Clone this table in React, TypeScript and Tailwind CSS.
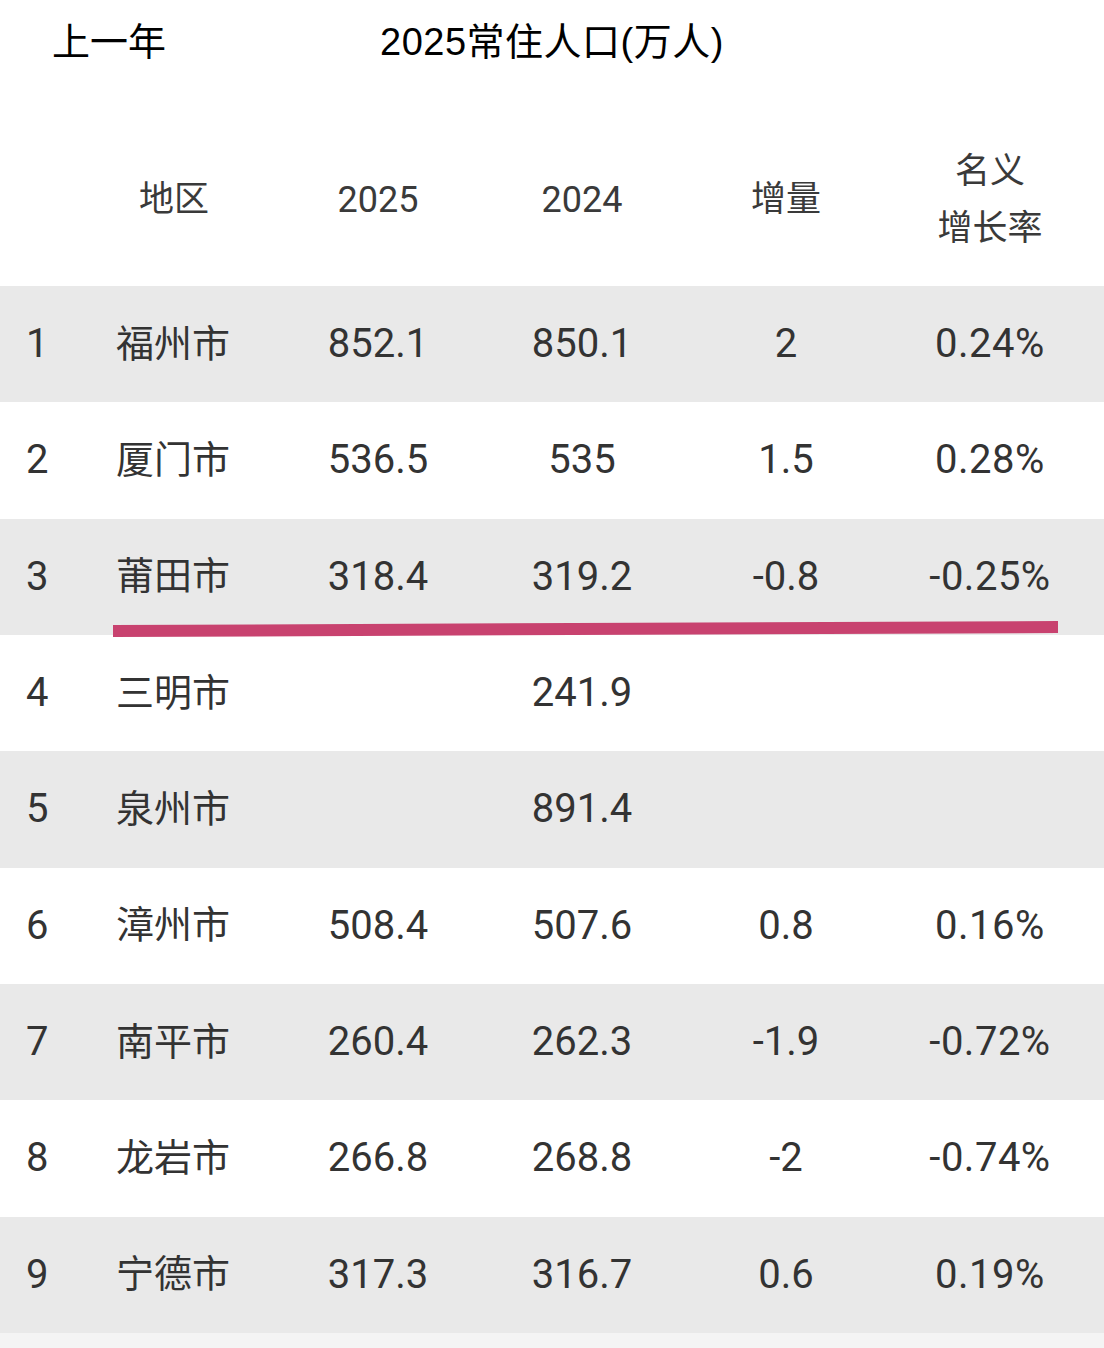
const rows = [
  { n: 1, city: "福州市", a: "852.1", b: "850.1", d: "2", r: "0.24%" },
  { n: 2, city: "厦门市", a: "536.5", b: "535", d: "1.5", r: "0.28%" },
  { n: 3, city: "莆田市", a: "318.4", b: "319.2", d: "-0.8", r: "-0.25%" },
  { n: 4, city: "三明市", a: "", b: "241.9", d: "", r: "" },
  { n: 5, city: "泉州市", a: "", b: "891.4", d: "", r: "" },
  { n: 6, city: "漳州市", a: "508.4", b: "507.6", d: "0.8", r: "0.16%" },
  { n: 7, city: "南平市", a: "260.4", b: "262.3", d: "-1.9", r: "-0.72%" },
  { n: 8, city: "龙岩市", a: "266.8", b: "268.8", d: "-2", r: "-0.74%" },
  { n: 9, city: "宁德市", a: "317.3", b: "316.7", d: "0.6", r: "0.19%" },
]

const grid = "grid grid-cols-[116px_160px_204px_204px_204px_204px_12px]"

export default function App() {
  return (
    <div className="w-[1104px] h-[1348px] overflow-hidden bg-white font-['Roboto','Noto_Sans_CJK_SC',sans-serif] text-[#333]">
      {/* title */}
      <div className="flex h-[84px] items-center text-[38px] text-black font-['Liberation_Sans','Noto_Sans_CJK_SC',sans-serif]">
        <div className="w-[380px] pl-[52px]">上一年</div>
        <div className="tracking-[0.5px]">2025常住人口(万人)</div>
      </div>

      {/* header */}
      <div className={`${grid} h-[202px] items-center pt-[30px] text-[35px] text-[#3a3a3a]`}>
        <div />
        <div className="pl-[23px]">地区</div>
        <div className="text-center text-[36px]">2025</div>
        <div className="text-center text-[36px]">2024</div>
        <div className="text-center">增量</div>
        <div className="text-center leading-[57px]">
          名义
          <br />
          增长率
        </div>
        <div />
      </div>

      {/* rows */}
      <div className="relative">
        {rows.map((row, i) => (
          <div
            key={row.n}
            className={`${grid} h-[116.33px] items-center text-[40px] ${i % 2 === 0 ? "bg-[#e9e9e9]" : "bg-white"}`}
          >
            <div className="pl-[26px]">{row.n}</div>
            <div className="text-[38px]">{row.city}</div>
            <div className="text-center">{row.a}</div>
            <div className="text-center">{row.b}</div>
            <div className="text-center">{row.d}</div>
            <div className="text-center tracking-[0.5px]">{row.r}</div>
            <div />
          </div>
        ))}
        <div className="h-[20px] bg-[#f4f4f4]" />

        {/* hand-drawn underline */}
        <svg className="absolute left-0 top-[332px] h-[24px] w-[1104px]" viewBox="0 0 1104 24">
          <polygon points="113,7 1058,3 1058,15 113,19" fill="#c8426f" />
        </svg>
      </div>
    </div>
  )
}
